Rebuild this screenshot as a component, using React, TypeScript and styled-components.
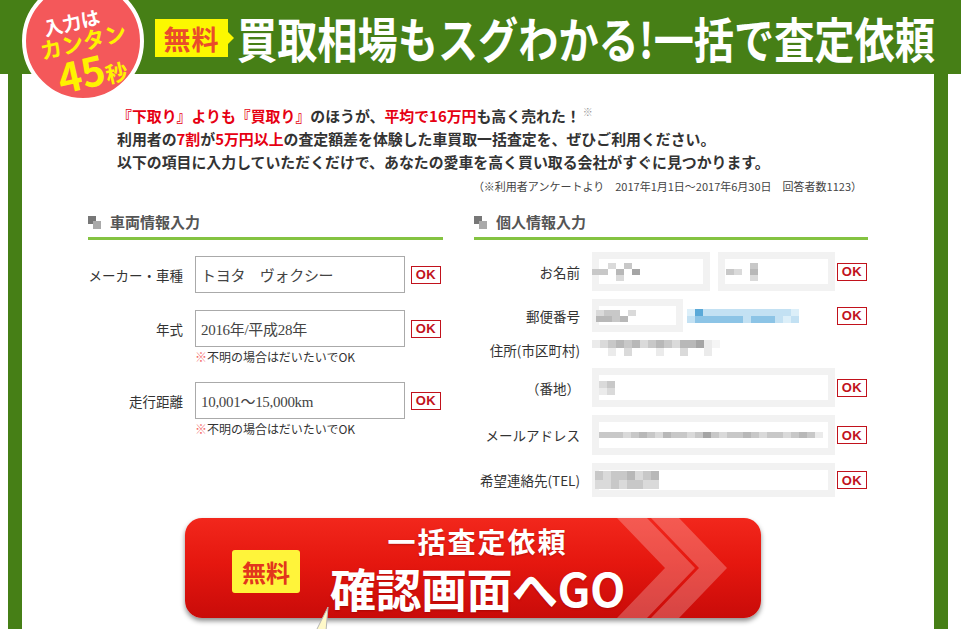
import React from 'react';
import styled, { createGlobalStyle } from 'styled-components';

const GREEN = '#467f16';
const RED = '#e60012';

const Global = createGlobalStyle`
  html, body { margin: 0; padding: 0; background: #fff; }
  body { font-family: "Noto Sans CJK JP", "Noto Sans", sans-serif; color: #333; }
`;

const Page = styled.div`
  position: relative;
  width: 961px;
  height: 629px;
  overflow: hidden;
`;

const Header = styled.header`
  height: 74px;
  background: ${GREEN};
  display: flex;
  align-items: center;
  padding-left: 155px;
  box-sizing: border-box;
`;

const FreeTag = styled.span`
  position: relative;
  flex: none;
  display: inline-flex;
  align-items: center;
  justify-content: center;
  width: 73px;
  height: 38px;
  background: #fcf800;
  color: #ea4b2a;
  font-size: 27px;
  font-weight: 700;
  letter-spacing: 1px;
  line-height: 1;
  margin-top: 2px;
  white-space: nowrap;
  &::after {
    content: '';
    position: absolute;
    right: -6px;
    top: 50%;
    margin-top: -6px;
    border-left: 6px solid #fcf800;
    border-top: 6px solid transparent;
    border-bottom: 6px solid transparent;
  }
`;

const Title = styled.h1`
  flex: none;
  margin: 0 0 0 9px;
  color: #fff;
  font-size: 48px;
  font-weight: 700;
  line-height: 1;
  white-space: nowrap;
  transform: scaleX(0.837);
  transform-origin: left center;
  letter-spacing: 0;
`;

const Badge = styled.div`
  position: absolute;
  left: 22px;
  top: -20px;
  width: 122px;
  height: 122px;
  border-radius: 50%;
  background: #f4585a;
  border: 4px solid #fff;
  box-sizing: border-box;
`;

const BadgeText = styled.div`
  position: absolute;
  inset: 0;
  padding-top: 18px;
  display: flex;
  flex-direction: column;
  align-items: center;
  justify-content: center;
  transform: rotate(-13deg);
  font-weight: 700;
  line-height: 1;
`;

const BadgeLine = styled.span<{ $color: string; $size: number; $shift: number }>`
  color: ${(p) => p.$color};
  font-size: ${(p) => p.$size}px;
  margin-left: ${(p) => p.$shift}px;
  white-space: nowrap;
`;

const BadgeSmall = styled.span`
  font-size: 22px;
`;

const Frame = styled.main`
  margin-left: 8px;
  width: 940px;
  box-sizing: border-box;
  border-left: 14px solid ${GREEN};
  border-right: 14px solid ${GREEN};
  min-height: 560px;
  padding-top: 30px;
`;

const Intro = styled.div`
  padding-left: 95px;
  font-size: 14.9px;
  font-weight: 700;
  line-height: 23px;
  color: #333;
`;

const IntroLine = styled.div`
  white-space: nowrap;
  height: 23px;
`;

const Em = styled.span`
  color: ${RED};
`;

const Sup = styled.span`
  position: relative;
  top: -6px;
  font-size: 10px;
  font-weight: 400;
  color: #999;
  margin-left: 2px;
`;

const Survey = styled.div`
  text-align: right;
  padding-right: 72px;
  margin-top: 5px;
  font-size: 11px;
  line-height: 16px;
  color: #444;
`;

const Columns = styled.div`
  display: grid;
  grid-template-columns: 355px 394px;
  column-gap: 31px;
  padding-left: 66px;
  margin-top: 18px;
  align-items: start;
`;

const Section = styled.section``;

const SectionHead = styled.h2`
  margin: 0;
  display: flex;
  align-items: center;
  gap: 9px;
  font-size: 15px;
  font-weight: 700;
  color: #555;
  line-height: 20px;
  padding-bottom: 5px;
  border-bottom: 3px solid #84c341;
`;

const HeadIcon = styled.span`
  position: relative;
  width: 13px;
  height: 13px;
  flex: none;
  &::before,
  &::after {
    content: '';
    position: absolute;
    width: 8px;
    height: 8px;
  }
  &::before { left: 0; top: 0; background: #777; }
  &::after { right: 0; bottom: 0; background: #aaa; }
`;

const Rows = styled.div<{ $top: number; $gap: number }>`
  display: flex;
  flex-direction: column;
  gap: ${(p) => p.$gap}px;
  padding-top: ${(p) => p.$top}px;
`;

const Row = styled.div<{ $h: number }>`
  display: flex;
  align-items: flex-start;
  min-height: ${(p) => p.$h}px;
`;

const Label = styled.div<{ $w: number; $h: number }>`
  width: ${(p) => p.$w}px;
  height: ${(p) => p.$h}px;
  display: flex;
  align-items: center;
  justify-content: flex-end;
  font-size: 13.5px;
  color: #333;
  white-space: nowrap;
  margin-right: 12px;
  flex: none;
`;

const FieldCol = styled.div`
  display: flex;
  flex-direction: column;
`;

const TextInput = styled.div`
  width: 210px;
  height: 37px;
  box-sizing: border-box;
  border: 1px solid #aaa;
  display: flex;
  align-items: center;
  padding-left: 5px;
  font-family: "Liberation Serif", "Noto Sans CJK JP", serif;
  font-size: 15px;
  color: #444;
  white-space: nowrap;
  letter-spacing: -0.3px;
`;

const Hint = styled.div`
  font-size: 12px;
  line-height: 16px;
  color: #333;
  margin-top: 2px;
`;

const HintMark = styled.span`
  color: #f46c6c;
`;

const OkWrap = styled.div<{ $h: number; $gap: number }>`
  height: ${(p) => p.$h}px;
  display: flex;
  align-items: center;
  margin-left: ${(p) => p.$gap}px;
`;

const Ok = styled.span`
  display: inline-flex;
  align-items: center;
  justify-content: center;
  width: 30px;
  height: 18px;
  box-sizing: border-box;
  border: 1.5px solid #c1121c;
  background: #fff;
  color: #c1121c;
  font-family: "Liberation Sans", Arial, sans-serif;
  font-size: 13px;
  font-weight: 700;
  letter-spacing: 0.5px;
`;

const BlurBox = styled.div<{ $w: number; $h: number }>`
  width: ${(p) => p.$w}px;
  height: ${(p) => p.$h}px;
  box-sizing: border-box;
  border: 7px solid #f2f2f2;
  background: #fff;
  display: flex;
  align-items: center;
  flex: none;
`;

const PixelRow = styled.div<{ $offset: number }>`
  display: flex;
  flex-direction: column;
  margin-left: ${(p) => p.$offset}px;
`;

const PixelLine = styled.div`
  display: flex;
`;

const Cell = styled.span<{ $h: number }>`
  display: block;
  width: 8px;
  height: ${(p) => p.$h}px;
`;

const SHADES: Record<string, string> = {
  a: '#a5a5a5',
  b: '#b8b8b8',
  c: '#c8c8c8',
  d: '#dadada',
  e: '#ebebeb',
  f: '#f5f5f5',
  x: '#5aa9d8',
  y: '#8cc4e6',
  z: '#c3e1f3',
  w: '#dceff9',
  p: '#f7dfe2',
  ' ': 'transparent',
};

const Pixels: React.FC<{ rows: string[]; cell?: number; offset?: number }> = ({ rows, cell = 8, offset = 0 }) => (
  <PixelRow $offset={offset}>
    {rows.map((r, i) => (
      <PixelLine key={i}>
        {r.split('').map((ch, j) => (
          <Cell key={j} $h={cell} style={{ background: SHADES[ch] }} />
        ))}
      </PixelLine>
    ))}
  </PixelRow>
);

const NameBoxes = styled.div`
  display: flex;
  gap: 8px;
`;

const ZipGroup = styled.div`
  display: flex;
  align-items: center;
  gap: 4px;
`;

const ButtonArea = styled.div`
  padding: 21px 0 0 163px;
`;

const GoButton = styled.button`
  position: relative;
  display: flex;
  align-items: center;
  width: 576px;
  height: 100px;
  border: 0;
  border-radius: 17px;
  padding: 0 0 0 47px;
  background: linear-gradient(180deg, #f2271c 0%, #e5170f 45%, #c90b09 100%);
  box-shadow: 0 3px 5px rgba(0, 0, 0, 0.45);
  font-family: inherit;
  cursor: pointer;
`;

const Chevrons = styled.svg`
  position: absolute;
  right: 14px;
  top: 0;
`;

const BtnFree = styled.span`
  display: inline-flex;
  align-items: center;
  justify-content: center;
  width: 68px;
  height: 43px;
  border-radius: 3px;
  background: #fff43a;
  color: #e2361c;
  font-size: 24px;
  font-weight: 700;
  margin-top: 7px;
  flex: none;
`;

const BtnText = styled.div`
  display: flex;
  flex-direction: column;
  align-items: center;
  margin-left: 30px;
  margin-top: 4px;
  color: #fff;
  font-weight: 700;
  text-shadow: 0 1px 2px rgba(120, 0, 0, 0.4);
  position: relative;
`;

const BtnSmall = styled.span`
  font-size: 28px;
  line-height: 34px;
  letter-spacing: 2px;
`;

const BtnBig = styled.span`
  font-size: 46px;
  line-height: 58px;
  letter-spacing: -0.5px;
  white-space: nowrap;
`;

const BubbleTail = styled.svg`
  position: absolute;
  left: 312px;
  top: 605px;
`;

export default function App() {
  return (
    <Page>
      <Global />
      <Header>
        <FreeTag>無料</FreeTag>
        <Title>買取相場もスグわかる!一括で査定依頼</Title>
      </Header>
      <Badge>
        <BadgeText>
          <BadgeLine $color="#fff" $size={19} $shift={-14}>入力は</BadgeLine>
          <BadgeLine $color="#fff200" $size={22} $shift={0}>カンタン</BadgeLine>
          <BadgeLine $color="#fff200" $size={40} $shift={4}>
            45<BadgeSmall>秒</BadgeSmall>
          </BadgeLine>
        </BadgeText>
      </Badge>
      <Frame>
        <Intro>
          <IntroLine>
            <Em>『下取り』よりも『買取り』</Em>のほうが、<Em>平均で16万円</Em>も高く売れた！<Sup>※</Sup>
          </IntroLine>
          <IntroLine>
            利用者の<Em>7割</Em>が<Em>5万円以上</Em>の査定額差を体験した車買取一括査定を、ぜひご利用ください。
          </IntroLine>
          <IntroLine>以下の項目に入力していただくだけで、あなたの愛車を高く買い取る会社がすぐに見つかります。</IntroLine>
        </Intro>
        <Survey>（※利用者アンケートより　2017年1月1日～2017年6月30日　回答者数1123）</Survey>
        <Columns>
          <Section>
            <SectionHead>
              <HeadIcon />
              車両情報入力
            </SectionHead>
            <Rows $top={16} $gap={17}>
              <Row $h={37}>
                <Label $w={95} $h={37}>メーカー・車種</Label>
                <FieldCol>
                  <TextInput>トヨタ　ヴォクシー</TextInput>
                </FieldCol>
                <OkWrap $h={37} $gap={6}><Ok>OK</Ok></OkWrap>
              </Row>
              <Row $h={37}>
                <Label $w={95} $h={37}>年式</Label>
                <FieldCol>
                  <TextInput>2016年/平成28年</TextInput>
                  <Hint><HintMark>※</HintMark>不明の場合はだいたいでOK</Hint>
                </FieldCol>
                <OkWrap $h={37} $gap={6}><Ok>OK</Ok></OkWrap>
              </Row>
              <Row $h={37}>
                <Label $w={95} $h={37}>走行距離</Label>
                <FieldCol>
                  <TextInput>10,001～15,000km</TextInput>
                  <Hint><HintMark>※</HintMark>不明の場合はだいたいでOK</Hint>
                </FieldCol>
                <OkWrap $h={37} $gap={6}><Ok>OK</Ok></OkWrap>
              </Row>
            </Rows>
          </Section>
          <Section>
            <SectionHead>
              <HeadIcon />
              個人情報入力
            </SectionHead>
            <Rows $top={12} $gap={8}>
              <Row $h={39}>
                <Label $w={106} $h={39}>お名前</Label>
                <NameBoxes>
                  <BlurBox $w={118} $h={39}>
                    <Pixels rows={['  d c ', 'cc b a', '   d  ']} cell={6} offset={-7} />
                  </BlurBox>
                  <BlurBox $w={117} $h={39}>
                    <Pixels rows={['    c ', ' cd b ', '    d ']} cell={6} offset={-7} />
                  </BlurBox>
                </NameBoxes>
                <OkWrap $h={39} $gap={2}><Ok>OK</Ok></OkWrap>
              </Row>
              <Row $h={33}>
                <Label $w={106} $h={33}>郵便番号</Label>
                <ZipGroup>
                  <BlurBox $w={91} $h={33}>
                    <Pixels rows={['dcc d', 'bbcb ']} cell={6} offset={-3} />
                  </BlurBox>
                  <Pixels rows={['wxzzzzzzzzzzzw', 'zyyyyyyzyyyzwz']} cell={7} offset={0} />
                </ZipGroup>
                <OkWrap $h={33} $gap={38}><Ok>OK</Ok></OkWrap>
              </Row>
              <Row $h={20}>
                <Label $w={106} $h={20}>住所(市区町村)</Label>
                <Pixels rows={['edcbcbdcbcdbbaef', '  e d   e  d  e ']} cell={8} offset={0} />
              </Row>
              <Row $h={39}>
                <Label $w={106} $h={39}>（番地）</Label>
                <BlurBox $w={243} $h={39}>
                  <Pixels rows={['dc', 'ed']} cell={7} offset={0} />
                </BlurBox>
                <OkWrap $h={39} $gap={2}><Ok>OK</Ok></OkWrap>
              </Row>
              <Row $h={40}>
                <Label $w={106} $h={40}>メールアドレス</Label>
                <BlurBox $w={243} $h={40}>
                  <Pixels rows={['cccdcbcdbccdcacdccbcdccdcbce']} cell={6} offset={0} />
                </BlurBox>
                <OkWrap $h={40} $gap={2}><Ok>OK</Ok></OkWrap>
              </Row>
              <Row $h={34}>
                <Label $w={106} $h={34}>希望連絡先(TEL)</Label>
                <BlurBox $w={243} $h={34}>
                  <Pixels rows={['cdccbdcb', 'ddcdccdd']} cell={9} offset={-4} />
                </BlurBox>
                <OkWrap $h={34} $gap={2}><Ok>OK</Ok></OkWrap>
              </Row>
            </Rows>
          </Section>
        </Columns>
        <ButtonArea>
          <GoButton type="button">
            <Chevrons width="130" height="100" viewBox="0 0 130 100">
              <polygon points="0,0 30,0 78,50 30,100 0,100 48,50" fill="rgba(255,255,255,0.24)" />
              <polygon points="34,0 62,0 110,50 62,100 34,100 82,50" fill="rgba(255,255,255,0.24)" />
            </Chevrons>
            <BtnFree>無料</BtnFree>
            <BtnText>
              <BtnSmall>一括査定依頼</BtnSmall>
              <BtnBig>確認画面へGO</BtnBig>
            </BtnText>
          </GoButton>
        </ButtonArea>
      </Frame>
      <BubbleTail width="26" height="26" viewBox="0 0 26 26">
        <polygon points="4,26 16,2 14,26" fill="#fff9c9" stroke="#b5b5b5" strokeWidth="1" />
      </BubbleTail>
    </Page>
  );
}
